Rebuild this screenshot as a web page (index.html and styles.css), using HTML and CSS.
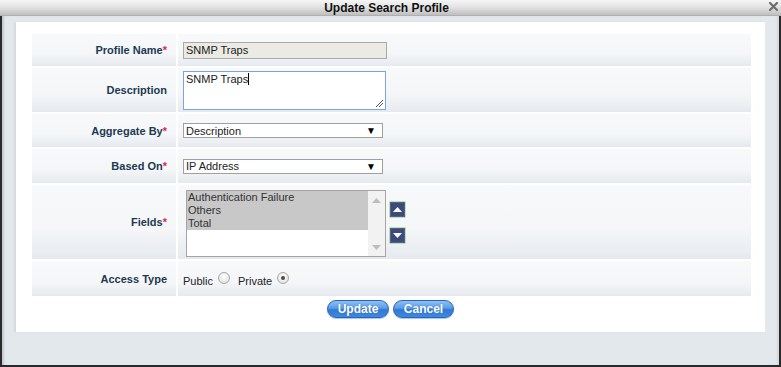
FILE: index.html
```html
<!DOCTYPE html>
<html>
<head>
<meta charset="utf-8">
<title>Update Search Profile</title>
<link rel="stylesheet" href="styles.css">
</head>
<body>
<div class="dialog">
  <div class="titlebar">
    <span class="title">Update Search Profile</span>
    <svg class="close" width="9" height="9" viewBox="0 0 9 9"><path d="M1 1 L8 8 M8 1 L1 8" stroke="#6e6e6e" stroke-width="2.2" stroke-linecap="square"/></svg>
  </div>
  <div class="frame">
    <div class="panel">
      <div class="form">
        <div class="label r1">Profile Name<span class="req">*</span></div>
        <div class="value r1"><div class="text-input disabled">SNMP Traps</div></div>

        <div class="label r2">Description</div>
        <div class="value r2">
          <div class="textarea">SNMP Traps<span class="caret"></span>
            <svg class="grip" width="9" height="9" viewBox="0 0 9 9"><path d="M8 1 L1 8 M8 4 L4 8" stroke="#555" stroke-width="1"/></svg>
          </div>
        </div>

        <div class="label r3">Aggregate By<span class="req">*</span></div>
        <div class="value r3"><div class="select"><span>Description</span><span class="tri">&#9660;</span></div></div>

        <div class="label r4">Based On<span class="req">*</span></div>
        <div class="value r4"><div class="select"><span>IP Address</span><span class="tri">&#9660;</span></div></div>

        <div class="label r5">Fields<span class="req">*</span></div>
        <div class="value r5 fields">
          <div class="listbox">
            <div class="items">
              <div class="item sel">Authentication Failure</div>
              <div class="item sel">Others</div>
              <div class="item sel">Total</div>
            </div>
            <div class="scroll">
              <svg width="9" height="5" viewBox="0 0 9 5"><path d="M0 5 L4.5 0 L9 5 Z" fill="#bdbdbd"/></svg>
              <svg width="9" height="5" viewBox="0 0 9 5"><path d="M0 0 L4.5 5 L9 0 Z" fill="#bdbdbd"/></svg>
            </div>
          </div>
          <div class="movers">
            <div class="mover"><svg width="9" height="5" viewBox="0 0 9 5"><path d="M0 5 L4.5 0 L9 5 Z" fill="#fff"/></svg></div>
            <div class="mover"><svg width="9" height="5" viewBox="0 0 9 5"><path d="M0 0 L4.5 5 L9 0 Z" fill="#fff"/></svg></div>
          </div>
        </div>

        <div class="label r6">Access Type</div>
        <div class="value r6 access">
          <span class="opt">Public</span><span class="radio"></span>
          <span class="opt">Private</span><span class="radio checked"></span>
        </div>
      </div>
      <div class="actions">
        <button class="btn btn-update">Update</button>
        <button class="btn btn-cancel">Cancel</button>
      </div>
    </div>
  </div>
</div>
</body>
</html>
```

FILE: styles.css
```css
* { box-sizing: border-box; }
html, body { margin: 0; padding: 0; background: #fff; }
body { font-family: "Liberation Sans", Arial, sans-serif; }

.dialog {
  width: 781px;
  height: 367px;
  display: flex;
  flex-direction: column;
}

.titlebar {
  height: 16px;
  flex: none;
  position: relative;
  display: flex;
  align-items: center;
  justify-content: center;
  background: linear-gradient(#f6f6f6 0%, #e2e2e2 45%, #c2c2c2 90%, #a8a8a8 100%);
}
.title {
  font-size: 12px;
  font-weight: bold;
  color: #111;
  line-height: 16px;
  margin-left: -8px;
}
.close {
  position: absolute;
  right: 3px;
  top: 2px;
}

.frame {
  flex: 1;
  border-left: 2px solid #2a2a2a;
  border-right: 2px solid #2a2a2a;
  border-bottom: 2px solid #2a2a2a;
  background: #e3e8ed;
  padding: 6px 14px 33px 14px;
  box-shadow: inset 3px 0 2px -1px #c3c9d1, inset -3px 0 2px -1px #d3d8de;
}

.panel {
  height: 100%;
  background: #fff;
  padding: 12px 14px 0 16px;
  box-shadow: -2px 0 2px #d3d9e0;
}

.form {
  display: grid;
  grid-template-columns: 144px 1fr;
  grid-template-rows: 32px 44px 33px 34px 74px 35px;
  column-gap: 2px;
  row-gap: 2px;
}

.label, .value {
  background: linear-gradient(#f8f9fa 0%, #f4f6f8 60%, #eaedf1 90%, #e5e9ed 100%);
}
.label {
  display: flex;
  align-items: center;
  justify-content: flex-end;
  padding-right: 9px;
  font-size: 11px;
  font-weight: bold;
  color: #1d3a52;
}
.req { color: #e8234f; }

.value {
  display: flex;
  align-items: center;
  padding-left: 5px;
  font-size: 11px;
  color: #1a1a1a;
}

.text-input {
  width: 204px;
  height: 17px;
  border: 1px solid #a9a9a9;
  font-size: 11px;
  line-height: 15px;
  padding-left: 2px;
  margin-top: 1px;
}
.text-input.disabled { background: #ebebe4; }

.textarea {
  position: relative;
  width: 203px;
  height: 39px;
  border: 1px solid #7aa5e2;
  background: #fff;
  font-size: 11px;
  line-height: 13px;
  padding: 1px 2px;
  margin-top: 1px;
}
.caret {
  display: inline-block;
  width: 1px;
  height: 12px;
  background: #000;
  vertical-align: -2px;
}
.grip { position: absolute; right: 1px; bottom: 1px; }

.select {
  width: 200px;
  height: 15px;
  border: 1px solid #a0a0a0;
  background: #fff;
  display: flex;
  align-items: center;
  justify-content: space-between;
  padding: 0 6px 0 2px;
  font-size: 11px;
  color: #222;
}
.tri { font-size: 10px; color: #000; }

.fields { padding-left: 8px; gap: 4px; align-items: flex-start; padding-top: 5px; }
.listbox {
  width: 200px;
  height: 67px;
  border: 1px solid #a5a5a5;
  background: #fff;
  display: flex;
}
.items { flex: 1; }
.item {
  height: 13px;
  line-height: 13px;
  padding-left: 1px;
  font-size: 11px;
  color: #333;
}
.item.sel { background: #c8c8c8; }
.scroll {
  width: 17px;
  background: #f2f2f2;
  display: flex;
  flex-direction: column;
  justify-content: space-between;
  align-items: center;
  padding: 7px 0 6px;
}
.movers {
  display: flex;
  flex-direction: column;
  gap: 11px;
  padding-top: 12px;
}
.mover {
  width: 15px;
  height: 15px;
  background: #3b4c7c;
  border: 1px solid #56627f;
  display: flex;
  align-items: center;
  justify-content: center;
  box-shadow: 0 0 0 0.5px #7fc97f;
}

.access { padding-left: 5px; padding-top: 5px; }
.opt { font-size: 11px; color: #222; }
.radio {
  display: inline-block;
  width: 12px;
  height: 12px;
  border-radius: 50%;
  border: 1px solid #a8a8a8;
  background: radial-gradient(circle at 50% 35%, #fff 0%, #e6e6e6 70%, #d0d0d0 100%);
  margin: -6px 8px 0 5px;
  position: relative;
}
.radio.checked::after {
  content: "";
  position: absolute;
  left: 3px;
  top: 3px;
  width: 4px;
  height: 4px;
  border-radius: 50%;
  background: #4a4a4a;
}

.actions {
  display: flex;
  justify-content: center;
  gap: 4px;
  margin-top: 4px;
}
.btn {
  height: 18px;
  border-radius: 9px;
  border: 1px solid #2b64b4;
  background: linear-gradient(#8dc0f3 0%, #5a9be6 45%, #2f78d4 55%, #3e8ae0 100%);
  color: #fff;
  font-family: "Liberation Sans", Arial, sans-serif;
  font-size: 12px;
  font-weight: bold;
  line-height: 16px;
  padding: 0;
  text-shadow: 0 0 1px #2a5fa6;
  box-shadow: 0 1px 1px #a9c4e4;
}
.btn-update { width: 62px; margin-left: -2px; }
.btn-cancel { width: 61px; }
```
